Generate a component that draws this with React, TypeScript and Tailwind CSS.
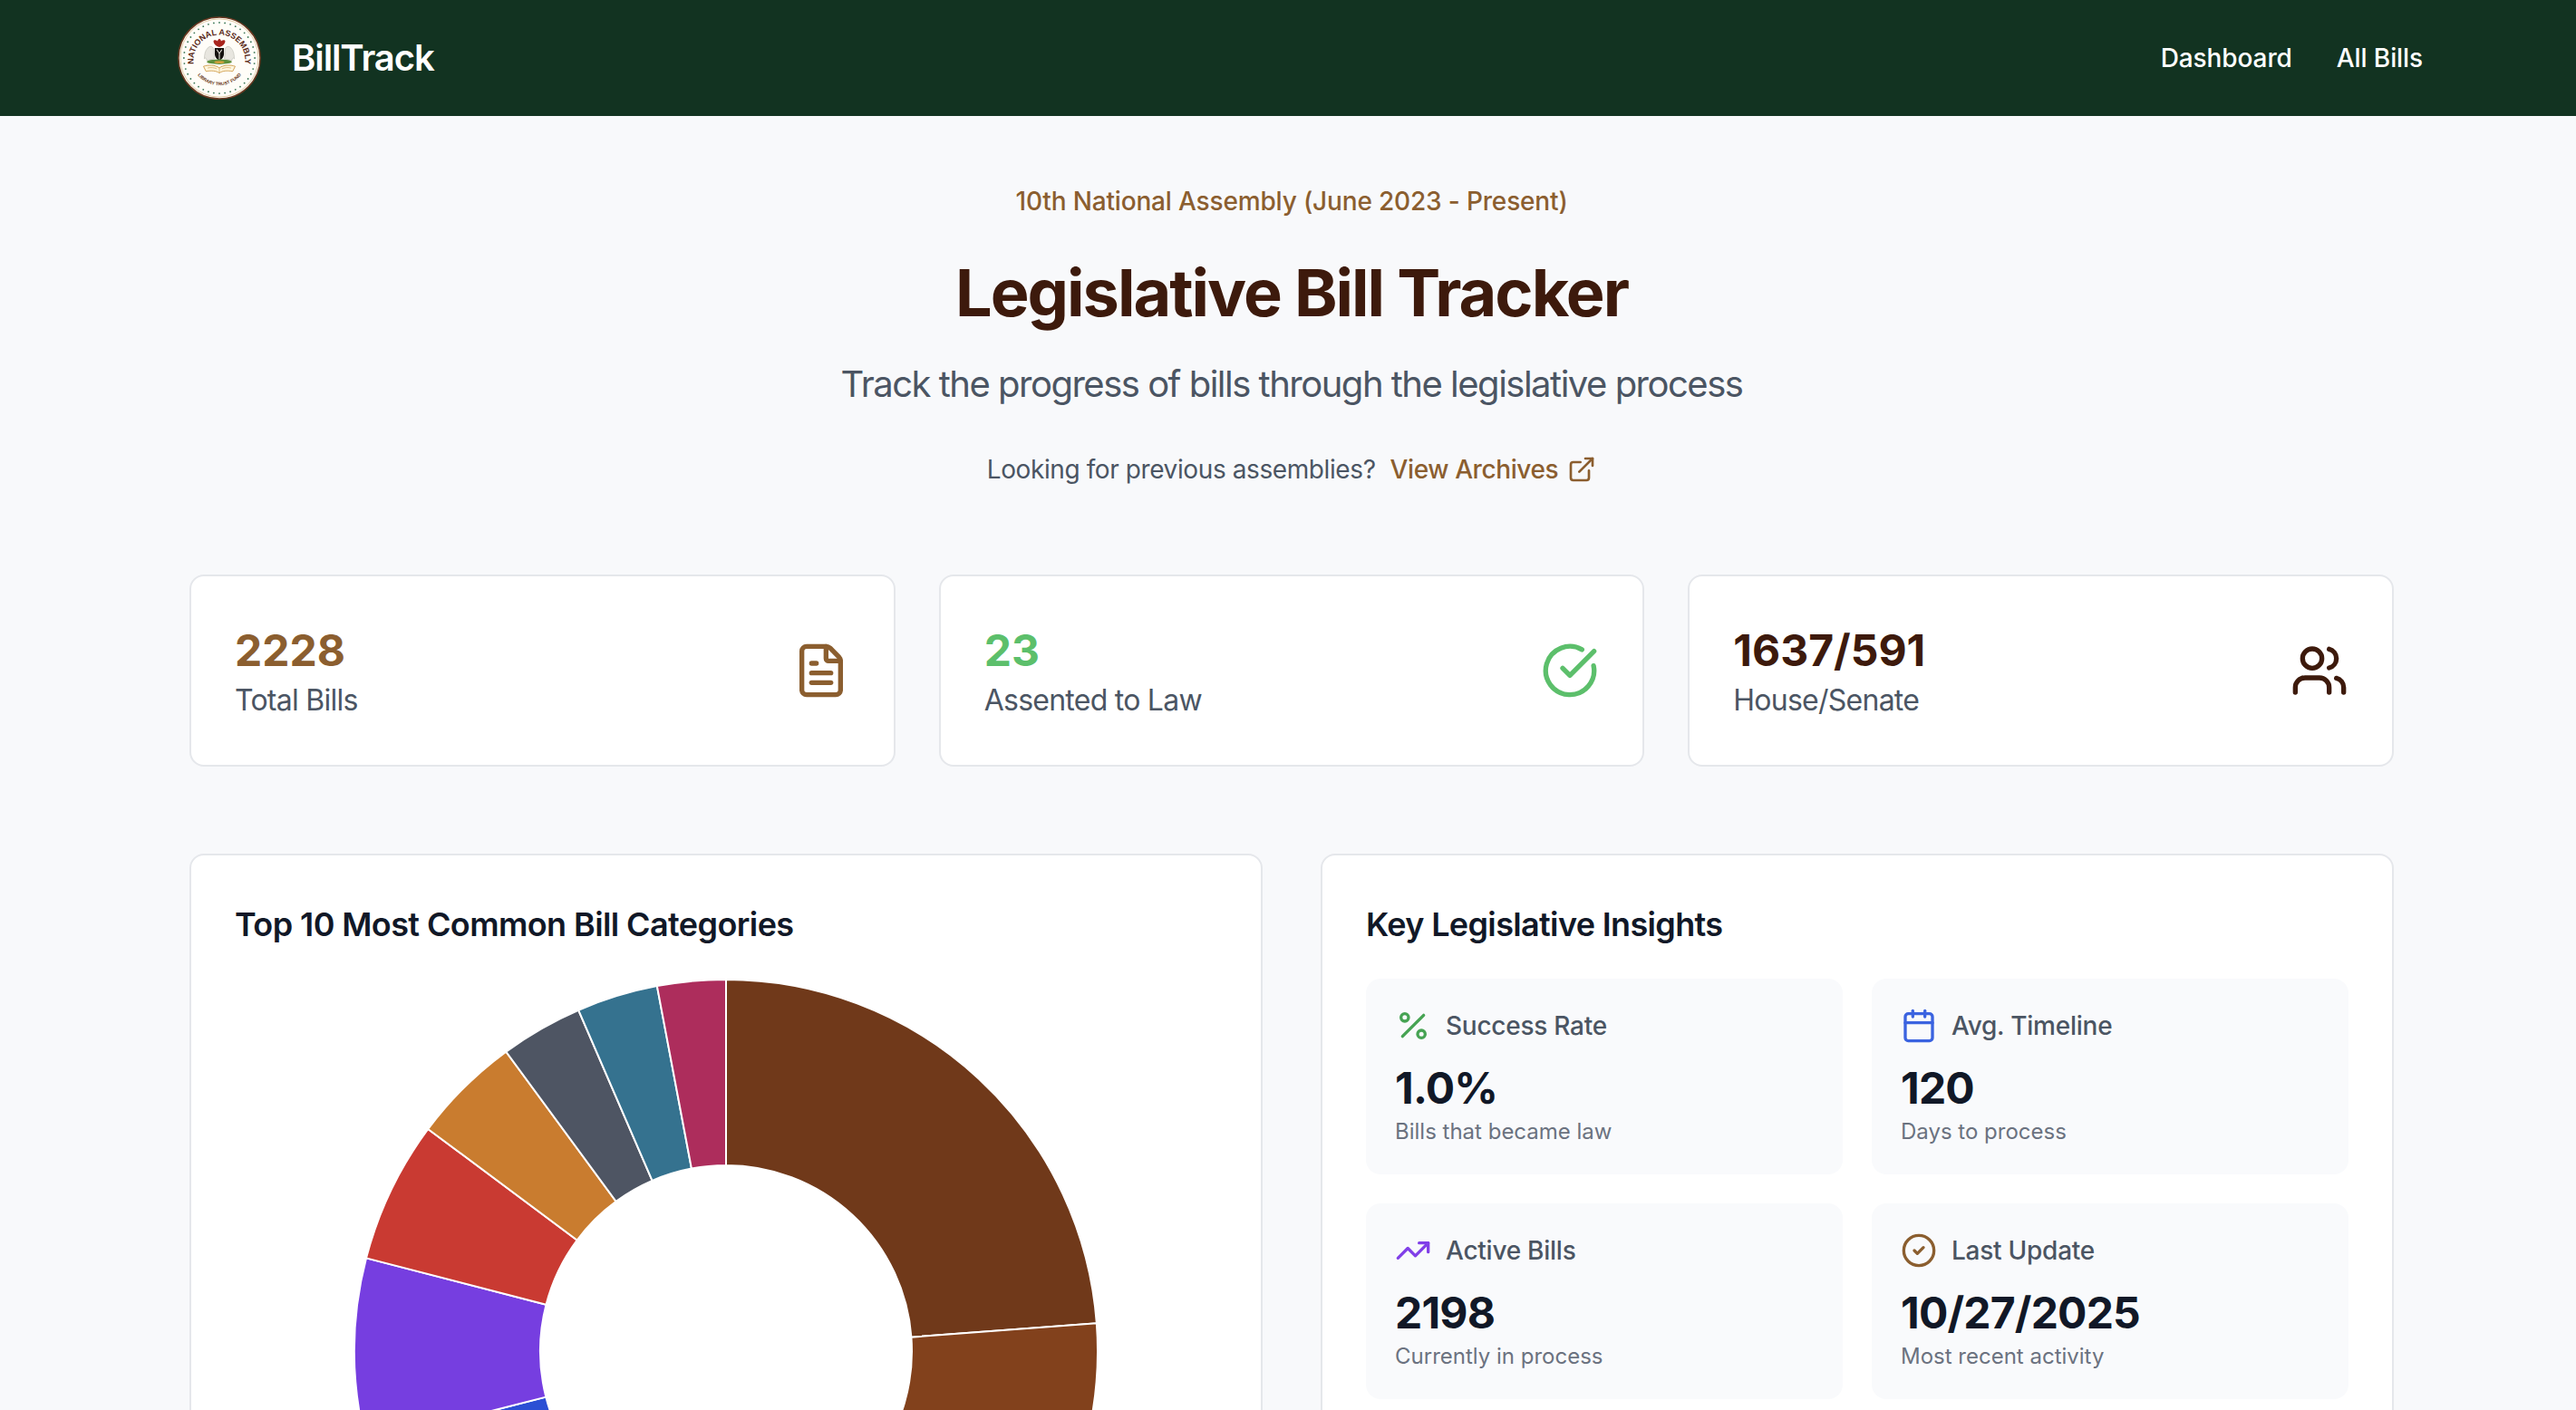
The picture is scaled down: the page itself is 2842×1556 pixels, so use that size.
import {
  Calendar,
  CircleCheck,
  CircleCheckBig,
  ExternalLink,
  FileText,
  Percent,
  TrendingUp,
  Users,
} from "lucide-react";

const CX = 411;
const CY = 411;
const R = 410;
const r = 205;

// angles clockwise from 12 o'clock, read off the reference
const slices = [
  { from: 0, to: 85.7, color: "#70391a" },
  { from: 85.7, to: 170, color: "#82411c" },
  { from: 170, to: 230, color: "#2b6b4f" },
  { from: 230, to: 255.7, color: "#2b4fd4" },
  { from: 255.7, to: 284.5, color: "#763ee0" },
  { from: 284.5, to: 306.7, color: "#c93a32" },
  { from: 306.7, to: 323.7, color: "#c97c2f" },
  { from: 323.7, to: 336.6, color: "#4e5563" },
  { from: 336.6, to: 349.3, color: "#35728f" },
  { from: 349.3, to: 360, color: "#ad2d5c" },
];

const point = (radius: number, deg: number) => {
  const a = (deg * Math.PI) / 180;
  return `${CX + radius * Math.sin(a)} ${CY - radius * Math.cos(a)}`;
};

const slicePath = (from: number, to: number) => {
  const large = to - from > 180 ? 1 : 0;
  return `M${point(R, from)} A${R} ${R} 0 ${large} 1 ${point(R, to)} L${point(r, to)} A${r} ${r} 0 ${large} 0 ${point(r, from)} Z`;
};

const Logo = () => {
  const dots = Array.from({ length: 40 }, (_, i) => (i * 360) / 40);
  return (
    <svg viewBox="0 0 100 100" className="h-[92px] w-[92px] shrink-0">
      <circle cx="50" cy="50" r="49" fill="#fffdf8" stroke="#6b3a22" strokeWidth="1.6" />
      <circle cx="50" cy="50" r="46.8" fill="none" stroke="#d9b98a" strokeWidth="0.8" />
      {dots.map((d) => (
        <circle
          key={d}
          cx={50 + 42.5 * Math.sin((d * Math.PI) / 180)}
          cy={50 - 42.5 * Math.cos((d * Math.PI) / 180)}
          r="1"
          fill="#3f7a5a"
        />
      ))}
      <defs>
        <path id="sealTop" d="M20 61 A31 31 0 1 1 80 61" />
        <path id="sealBottom" d="M19 62 A33.5 33.5 0 0 0 81 62" />
      </defs>
      <text fontSize="9.8" fontWeight="700" fill="#5a2a18" fontFamily="'Liberation Sans', sans-serif">
        <textPath href="#sealTop" startOffset="50%" textAnchor="middle">
          NATIONAL ASSEMBLY
        </textPath>
      </text>
      <text fontSize="5.4" fontWeight="700" fill="#6b3a22" fontFamily="'Liberation Sans', sans-serif">
        <textPath href="#sealBottom" startOffset="50%" textAnchor="middle">
          LIBRARY TRUST FUND
        </textPath>
      </text>
      {/* horses */}
      <path d="M36 38c3-3 6-2 7 1l1 12-9 2c-1-4-2-3-3-2 0-5 1-10 4-13z" fill="#e8e6df" stroke="#9b9b90" strokeWidth="0.4" />
      <path d="M64 38c-3-3-6-2-7 1l-1 12 9 2c1-4 2-3 3-2 0-5-1-10-4-13z" fill="#e8e6df" stroke="#9b9b90" strokeWidth="0.4" />
      {/* eagle */}
      <path d="M50 27c-2 1-2 2-2 3-2-2-5-2-5 0 0 3 3 6 7 7 4-1 7-4 7-7 0-2-3-2-5 0 0-1 0-2-2-3z" fill="#a8241d" />
      {/* shield */}
      <path d="M44.5 38h11v7c0 4-3 7-5.500 8-2.500-1-5.500-4-5.500-8z" fill="#14110e" />
      <path d="M47 40l3 4.500 3-4.500M50 44.500v7" fill="none" stroke="#f4f1e8" strokeWidth="1.1" />
      {/* grass */}
      <ellipse cx="50" cy="54.5" rx="15" ry="3" fill="#5d8f3a" />
      <ellipse cx="50" cy="55" rx="6" ry="1.6" fill="#d2a03a" />
      {/* book */}
      <path d="M31 60c6-2 14-2 19 2 5-4 13-4 19-2l-3 6c-6-1-12-1-16 2-4-3-10-3-16-2z" fill="#fff6df" stroke="#cf9d4c" strokeWidth="1" />
      <path d="M50 62v6M36 62c4-1 8-.5 11 1M64 62c-4-1-8-.5-11 1" fill="none" stroke="#cf9d4c" strokeWidth="0.7" />
    </svg>
  );
};

const stats = [
  { value: "2228", label: "Total Bills", color: "text-[#8b5e2f]", icon: FileText },
  { value: "23", label: "Assented to Law", color: "text-[#5cbf6b]", icon: CircleCheckBig },
  { value: "1637/591", label: "House/Senate", color: "text-[#3d1a0c]", icon: Users },
];

const insights = [
  { label: "Success Rate", value: "1.0%", sub: "Bills that became law", color: "text-[#46a353]", icon: Percent },
  { label: "Avg. Timeline", value: "120", sub: "Days to process", color: "text-[#3b63e0]", icon: Calendar },
  { label: "Active Bills", value: "2198", sub: "Currently in process", color: "text-[#8140e8]", icon: TrendingUp },
  { label: "Last Update", value: "10/27/2025", sub: "Most recent activity", color: "text-[#8b5e2f]", icon: CircleCheck },
];

const App = () => {
  return (
    <div className="h-screen overflow-hidden bg-[#f8f9fb] font-['Inter',sans-serif]">
      <nav className="h-[128px] bg-[#123321] pl-2">
        <div className="mx-auto flex h-full max-w-[2560px] items-center justify-between pl-[51px] pr-[32px]">
          <div className="flex items-center gap-[34px]">
            <Logo />
            <span className="text-[40px] font-semibold tracking-[-1.1px] text-white">BillTrack</span>
          </div>
          <div className="flex items-center gap-[49px] text-[28px] font-medium tracking-[-0.1px] text-white">
            <a>Dashboard</a>
            <a>All Bills</a>
          </div>
        </div>
      </nav>

      <main className="pl-2">
        <div className="mx-auto max-w-[2560px] px-16 pt-[72px]">
          <header className="flex flex-col items-center">
            <p className="text-[28px] leading-[44px] font-medium tracking-[-0.16px] text-[#8b5e2f]">
              10th National Assembly (June 2023 - Present)
            </p>
            <h1 className="mt-[39px] text-[72px] leading-[80px] font-bold tracking-[-2px] text-[#3d1a0c]">
              Legislative Bill Tracker
            </h1>
            <p className="mt-[33px] text-[40px] leading-[56px] tracking-[-1.5px] text-[#4b5563]">
              Track the progress of bills through the legislative process
            </p>
            <div className="mt-[46px] flex items-center text-[28px] leading-[40px] tracking-[-0.4px] text-[#4b5563]">
              <span>Looking for previous assemblies?</span>
              <a className="ml-4 flex items-center gap-[10px] font-medium text-[#8b5e2f]">
                View Archives
                <ExternalLink className="h-8 w-8" />
              </a>
            </div>
          </header>

          <section className="mt-[96px] grid grid-cols-3 gap-12">
            {stats.map((s) => (
              <div
                key={s.label}
                className="flex h-[212px] items-center justify-between rounded-2xl border-2 border-[#e5e7eb] bg-white px-12"
              >
                <div className="pt-[5px]">
                  <p className={`text-[48px] leading-[56px] font-bold ${s.color}`}>{s.value}</p>
                  <p className="mt-[5px] text-[32px] leading-[44px] tracking-[-0.75px] text-[#4b5563]">{s.label}</p>
                </div>
                <s.icon className={`h-16 w-16 ${s.color}`} />
              </div>
            ))}
          </section>

          <section className="mt-[96px] grid grid-cols-2 gap-16">
            <div className="rounded-2xl border-2 border-[#e5e7eb] bg-white px-12 pt-[48px]">
              <h2 className="text-[36px] leading-[56px] font-semibold tracking-[-0.6px] text-[#111827]">
                Top 10 Most Common Bill Categories
              </h2>
              <div className="mt-[32px] flex justify-center">
                <svg viewBox="0 0 822 822" className="h-[822px] w-[822px] shrink-0">
                  {slices.map((s) => (
                    <path key={s.from} d={slicePath(s.from, s.to)} fill={s.color} stroke="#ffffff" strokeWidth="2" />
                  ))}
                </svg>
              </div>
            </div>

            <div className="rounded-2xl border-2 border-[#e5e7eb] bg-white px-12 pt-[48px]">
              <h2 className="text-[36px] leading-[56px] font-semibold tracking-[-0.65px] text-[#111827]">
                Key Legislative Insights
              </h2>
              <div className="mt-[32px] grid grid-cols-2 gap-8">
                {insights.map((t) => (
                  <div key={t.label} className="h-[216px] rounded-2xl bg-[#f9fafc] p-8">
                    <div className="flex items-center gap-4">
                      <t.icon className={`h-10 w-10 ${t.color}`} />
                      <span className="text-[28px] leading-[40px] font-medium tracking-[-0.25px] text-[#4b5563]">
                        {t.label}
                      </span>
                    </div>
                    <p className="mt-[17px] text-[48px] leading-[64px] font-bold tracking-[-0.8px] text-[#111827]">
                      {t.value}
                    </p>
                    <p className="text-[24px] leading-[32px] text-[#6b7280]">{t.sub}</p>
                  </div>
                ))}
              </div>
            </div>
          </section>
        </div>
      </main>
    </div>
  );
};

export default App;
